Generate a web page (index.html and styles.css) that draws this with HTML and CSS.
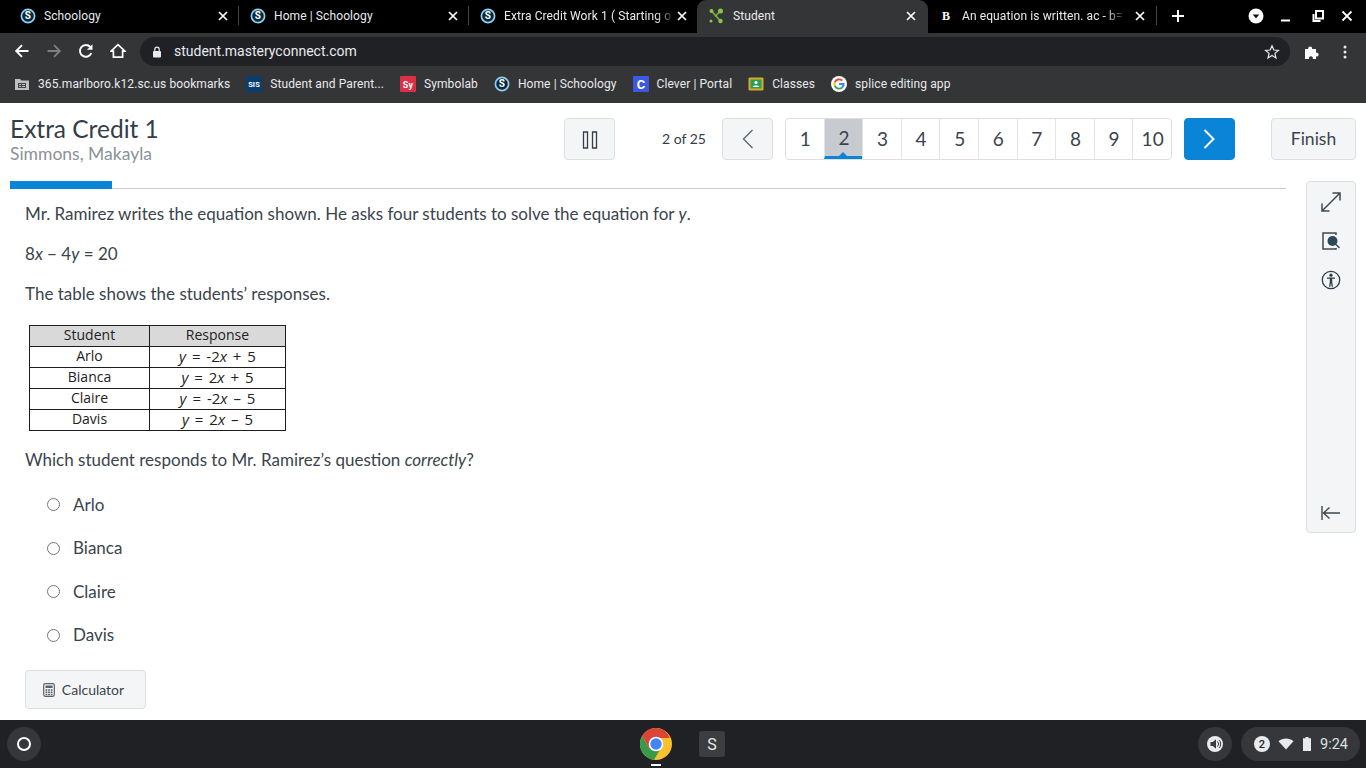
FILE: index.html
```html
<!DOCTYPE html>
<html lang="en">
<head>
<meta charset="utf-8">
<title>Student</title>
<link rel="stylesheet" href="styles.css">
</head>
<body>
<svg class="defs" width="0" height="0" aria-hidden="true">
  <symbol id="x" viewBox="0 0 12 12"><path d="M2 2l8 8M10 2l-8 8" stroke="#fff" stroke-width="1.7" fill="none"/></symbol>
</svg>
<header class="browser">
  <div class="tabstrip">
    <div class="tab"><svg class="fav" viewBox="0 0 16 16"><circle cx="8" cy="8" r="6.600" fill="#06263a" stroke="#8fd0ee" stroke-width="1.700"/><text x="8" y="11.400" text-anchor="middle" font-family="Roboto" font-weight="700" font-size="10" fill="#fff">S</text></svg><span class="tab-title">Schoology</span><svg class="close"><use href="#x"/></svg></div>
    <div class="tab sep"><svg class="fav" viewBox="0 0 16 16"><circle cx="8" cy="8" r="6.600" fill="#06263a" stroke="#8fd0ee" stroke-width="1.700"/><text x="8" y="11.400" text-anchor="middle" font-family="Roboto" font-weight="700" font-size="10" fill="#fff">S</text></svg><span class="tab-title">Home | Schoology</span><svg class="close"><use href="#x"/></svg></div>
    <div class="tab sep third"><svg class="fav" viewBox="0 0 16 16"><circle cx="8" cy="8" r="6.600" fill="#06263a" stroke="#8fd0ee" stroke-width="1.700"/><text x="8" y="11.400" text-anchor="middle" font-family="Roboto" font-weight="700" font-size="10" fill="#fff">S</text></svg><span class="tab-title fade">Extra Credit Work 1 ( Starting o</span><svg class="close"><use href="#x"/></svg></div>
    <div class="tab active"><svg class="fav" viewBox="0 0 16 16"><path d="M3.500 3l9 10M12.500 3L7 8.500" stroke="#7cb342" stroke-width="1.600"/><circle cx="3.500" cy="3" r="2" fill="#8bc34a"/><circle cx="12.500" cy="3" r="2.500" fill="#8bc34a"/><circle cx="12.500" cy="13" r="2.200" fill="#8bc34a"/><circle cx="3" cy="13" r="1.500" fill="#8bc34a"/></svg><span class="tab-title">Student</span><svg class="close"><use href="#x"/></svg></div>
    <div class="tab last"><svg class="fav" viewBox="0 0 16 16"><text x="8" y="12" text-anchor="middle" font-family="Liberation Serif" font-weight="700" font-size="12" fill="#fff">B</text></svg><span class="tab-title fade">An equation is written. ac - b=</span><svg class="close"><use href="#x"/></svg></div>
    <svg class="newtab" viewBox="0 0 14 14"><path d="M7 1v12M1 7h12" stroke="#fff" stroke-width="2"/></svg>
    <div class="win">
      <svg class="win-i" viewBox="0 0 16 16"><circle cx="8" cy="8" r="7.500" fill="#fff"/><path d="M4.800 6.500h6.400L8 10.600z" fill="#111"/></svg>
      <svg class="win-i win-min" viewBox="0 0 16 16"><path d="M3 12.500h9" stroke="#fff" stroke-width="2"/></svg>
      <svg class="win-i win-max" viewBox="0 0 16 16"><path d="M6 3h7v7.500H6zM3.500 6v7h7" stroke="#fff" stroke-width="2" fill="none"/></svg>
      <svg class="win-i" viewBox="0 0 16 16"><path d="M3.500 3.500l9 9M12.500 3.500l-9 9" stroke="#fff" stroke-width="1.800"/></svg>
    </div>
  </div>
  <div class="toolbar">
    <svg class="nav" viewBox="0 0 16 16"><path d="M14.500 8H2.500M8 2.200L2.200 8 8 13.800" stroke="#fff" stroke-width="1.900" fill="none"/></svg>
    <svg class="nav" viewBox="0 0 16 16"><path d="M1.500 8h12M8 2.200L13.800 8 8 13.800" stroke="#7d7e80" stroke-width="1.900" fill="none"/></svg>
    <svg class="nav" viewBox="0 0 16 16"><path d="M13.300 10.200A5.900 5.900 0 1 1 12.300 4" stroke="#fff" stroke-width="1.900" fill="none"/><path d="M14.500 1.200v5.600H8.900z" fill="#fff"/></svg>
    <svg class="nav" viewBox="0 0 16 16"><path d="M8 1.600L1 8.200h2.400v6h9.200v-6H15z" stroke="#fff" stroke-width="1.700" fill="none"/></svg>
    <div class="omnibox">
      <svg class="lock" viewBox="0 0 10 12"><path d="M2.800 5V3.400a2.200 2.200 0 0 1 4.400 0V5" stroke="#e8eaed" stroke-width="1.200" fill="none"/><rect x="1" y="5" width="8" height="6.500" rx="1" fill="#e8eaed"/></svg>
      <span class="url">student.masteryconnect.com</span>
      <svg class="star" viewBox="0 0 16 16"><path d="M8 1.800l1.800 4.200 4.600.4-3.500 3 1.100 4.500L8 11.500l-4 2.400 1.100-4.500-3.500-3 4.600-.4z" stroke="#e8eaed" stroke-width="1.200" fill="none"/></svg>
    </div>
    <svg class="puzzle" viewBox="0 0 16 16"><path d="M1 5h3.300a2 2 0 1 1 3.800 0H12v3.700a2 2 0 1 1 0 3.800V15H8.700a2 2 0 1 0-3.600 0H1z" fill="#fff"/></svg>
    <svg class="menu" viewBox="0 0 4 16"><circle cx="2" cy="3" r="1.500" fill="#e8eaed"/><circle cx="2" cy="8" r="1.500" fill="#e8eaed"/><circle cx="2" cy="13" r="1.500" fill="#e8eaed"/></svg>
  </div>
  <div class="bookmarks">
    <span class="bm"><svg class="bm-i" viewBox="0 0 16 16"><path d="M1 3h5l1.500 1.500H15V14H1z" fill="#bdbfc1"/><path d="M4 7h8v5H4z" fill="#444"/><path d="M5 8h2v1H5zM8 8h3v1H8zM5 10h2v1H5zM8 10h3v1H8z" fill="#bdbfc1"/></svg>365.marlboro.k12.sc.us bookmarks</span>
    <span class="bm"><svg class="bm-i" viewBox="0 0 16 16"><rect width="16" height="16" rx="1" fill="#0b3d6e"/><text x="8" y="11" text-anchor="middle" font-family="Roboto" font-weight="700" font-size="7.500" fill="#fff">SIS</text></svg>Student and Parent...</span>
    <span class="bm"><svg class="bm-i" viewBox="0 0 16 16"><rect width="16" height="16" rx="1" fill="#dc2f45"/><text x="8" y="11.500" text-anchor="middle" font-family="Roboto" font-weight="700" font-size="9" fill="#fff">Sy</text></svg>Symbolab</span>
    <span class="bm"><svg class="bm-i" viewBox="0 0 16 16"><circle cx="8" cy="8" r="6.600" fill="#06263a" stroke="#8fd0ee" stroke-width="1.700"/><text x="8" y="11.400" text-anchor="middle" font-family="Roboto" font-weight="700" font-size="10" fill="#fff">S</text></svg>Home | Schoology</span>
    <span class="bm"><svg class="bm-i" viewBox="0 0 16 16"><rect width="16" height="16" rx="1" fill="#3e58e0"/><text x="8" y="13" text-anchor="middle" font-family="Roboto" font-weight="700" font-size="13" fill="#fff">C</text></svg>Clever | Portal</span>
    <span class="bm"><svg class="bm-i" viewBox="0 0 16 16"><rect x="0.500" y="1.500" width="15" height="13" rx="1" fill="#d9a928"/><rect x="2.500" y="3.500" width="11" height="9" fill="#2e9d5c"/><circle cx="8" cy="6.500" r="1.600" fill="#fff"/><path d="M4.800 11c0-2 6.400-2 6.400 0z" fill="#fff"/></svg>Classes</span>
    <span class="bm"><svg class="bm-i" viewBox="0 0 16 16"><circle cx="8" cy="8" r="8" fill="#fff"/><path d="M8 4.200a3.800 3.800 0 0 1 2.600 1l1.300-1.300A5.700 5.700 0 0 0 3 5.500L4.600 6.700A3.700 3.700 0 0 1 8 4.200z" fill="#ea4335"/><path d="M4.600 6.700L3 5.500a5.700 5.700 0 0 0 0 5L4.600 9.300a3.700 3.700 0 0 1 0-2.600z" fill="#fbbc05"/><path d="M4.600 9.300L3 10.500a5.700 5.700 0 0 0 8.700 1.700l-1.500-1.200a3.700 3.700 0 0 1-5.600-1.700z" fill="#34a853"/><path d="M13.600 7H8v2.100h3.300a2.900 2.900 0 0 1-1.100 1.900l1.500 1.200A5.500 5.500 0 0 0 13.600 7z" fill="#4285f4"/></svg>splice editing app</span>
  </div>
</header>

<main class="page">
  <section class="head">
    <div class="titles">
      <h1 class="title">Extra Credit 1</h1>
      <div class="student">Simmons, Makayla</div>
    </div>
    <button class="btn btn-pause"><svg class="ic-pause" viewBox="0 0 16 18"><path d="M1.500 1h4v16h-4zM10.500 1h4v16h-4z" fill="none" stroke="#333e48" stroke-width="1.300"/></svg></button>
    <div class="count">2 of 25</div>
    <button class="btn btn-prev"><svg class="ic-chev" viewBox="0 0 12 20"><path d="M10.500 1L1.500 10l9 9" fill="none" stroke="#59636c" stroke-width="1.300"/></svg></button>
    <div class="pager">
      <span class="pg">1</span><span class="pg cur">2</span><span class="pg">3</span><span class="pg">4</span><span class="pg">5</span><span class="pg">6</span><span class="pg">7</span><span class="pg">8</span><span class="pg">9</span><span class="pg">10</span>
    </div>
    <button class="btn btn-next"><svg class="ic-chev" viewBox="0 0 12 20"><path d="M1.500 1l9 9-9 9" fill="none" stroke="#fff" stroke-width="2"/></svg></button>
    <button class="btn btn-finish">Finish</button>
  </section>

  <section class="work">
    <div class="col">
      <div class="progress"><div class="progress-fill"></div></div>
      <div class="question">
        <p>Mr. Ramirez writes the equation shown. He asks four students to solve the equation for <i>y</i>.</p>
        <p>8<i>x</i> − 4<i>y</i> = 20</p>
        <p>The table shows the students’ responses.</p>
        <table class="resp">
          <thead><tr><th class="c1">Student</th><th class="c2">Response</th></tr></thead>
          <tbody>
            <tr><td>Arlo</td><td class="eq"><i>y</i> = -2<i>x</i> + 5</td></tr>
            <tr><td>Bianca</td><td class="eq"><i>y</i> = 2<i>x</i> + 5</td></tr>
            <tr><td>Claire</td><td class="eq"><i>y</i> = -2<i>x</i> – 5</td></tr>
            <tr><td>Davis</td><td class="eq"><i>y</i> = 2<i>x</i> – 5</td></tr>
          </tbody>
        </table>
        <p class="ask">Which student responds to Mr. Ramirez’s question <i>correctly</i>?</p>
        <div class="choices">
          <label class="choice"><span class="radio"></span><span>Arlo</span></label>
          <label class="choice"><span class="radio"></span><span>Bianca</span></label>
          <label class="choice"><span class="radio"></span><span>Claire</span></label>
          <label class="choice"><span class="radio"></span><span>Davis</span></label>
        </div>
        <button class="btn btn-calc"><svg class="ic-calc" viewBox="0 0 12 14"><rect x="0.700" y="0.700" width="10.600" height="12.600" rx="1.500" fill="none" stroke="#59636c" stroke-width="1.200"/><path d="M2.500 2.500h7v2.500h-7z" fill="#59636c"/><path d="M2.500 6.300h1.800v1.500H2.500zM5.100 6.300h1.800v1.500H5.100zM7.700 6.300h1.800v1.500H7.700zM2.500 8.500h1.800V10H2.500zM5.100 8.500h1.800V10H5.100zM7.700 8.500h1.800V10H7.700zM2.500 10.700h1.800v1.500H2.500zM5.100 10.700h1.800v1.500H5.100zM7.700 10.700h1.800v1.500H7.700z" fill="#59636c"/></svg>Calculator</button>
      </div>
    </div>
    <aside class="side">
      <svg class="side-i" viewBox="0 0 20 20"><path d="M1 19L19 1M11.500 1H19v7.500M1 11.500V19h7.500" fill="none" stroke="#3f4952" stroke-width="1.500"/></svg>
      <svg class="side-i" viewBox="0 0 20 20"><path d="M15 4V2H2v16h13v-1" fill="none" stroke="#3f4952" stroke-width="1.500"/><circle cx="11.500" cy="10" r="5" fill="#2f4858"/><path d="M15 13.500l3.500 3.500" stroke="#3f4952" stroke-width="1.600"/></svg>
      <svg class="side-i" viewBox="0 0 20 20"><circle cx="10" cy="10" r="8.700" fill="none" stroke="#2f3b44" stroke-width="1.300"/><circle cx="10" cy="5.200" r="1.600" fill="#2f3b44"/><path d="M6 7.400h8v1.300h-2.800v3.200l.8 4.800h-1.300L10 12.800l-.7 3.900H8l.8-4.800V8.700H6z" fill="#2f3b44"/></svg>
      <svg class="side-i side-bottom" viewBox="0 0 20 14"><path d="M1 0v14M19 7H2.500M8.500 1.500L2.500 7l6 5.500" fill="none" stroke="#3f4952" stroke-width="1.400"/></svg>
    </aside>
  </section>
</main>

<footer class="shelf">
  <div class="shelf-l"><span class="launcher"><span class="launcher-dot"></span></span></div>
  <div class="shelf-c">
    <span class="app-chrome"><svg class="chrome" viewBox="0 0 32 32"><circle cx="16" cy="16" r="16" fill="#fbc02d"/><path d="M16 0A16 16 0 0 0 2.100 8L9.100 20 16 10h13.900A16 16 0 0 0 16 0z" fill="#db4437"/><path d="M2.100 8a16 16 0 0 0 11.800 23.900L20.900 20 9.100 20z" fill="#3a9a4b"/><circle cx="16" cy="16" r="7.300" fill="#fff"/><circle cx="16" cy="16" r="5.700" fill="#4285f4"/></svg><span class="running"></span></span>
    <span class="app-s">S</span>
  </div>
  <div class="shelf-r">
    <span class="vol"><svg class="vol-i" viewBox="0 0 16 16"><circle cx="8" cy="8" r="8" fill="#e8eaed"/><path d="M3.500 6v4h2.300L9 12.800V3.200L5.800 6z" fill="#3a3b3d"/><path d="M10.500 5.500a3.500 3.500 0 0 1 0 5M12 4a5.500 5.500 0 0 1 0 8" fill="none" stroke="#3a3b3d" stroke-width="1"/></svg></span>
    <span class="tray">
      <span class="badge">2</span>
      <svg class="wifi" viewBox="0 0 16 12"><path d="M8 11.500L.5 3.300C4.800-.4 11.200-.4 15.500 3.300z" fill="#e8eaed"/></svg>
      <svg class="batt" viewBox="0 0 8 14"><path d="M2.500 0h3v1.200H8V14H0V1.200h2.500z" fill="#e8eaed"/></svg>
      <span class="clock">9:24</span>
    </span>
  </div>
</footer>
</body>
</html>
```

FILE: styles.css
```css
* { box-sizing: border-box; }
html, body { margin: 0; padding: 0; height: 100%; }
body { width: 1366px; height: 768px; overflow: hidden; display: flex; flex-direction: column; background: #fff; font-family: "Lato", sans-serif; color: #3a444d; }
.defs { display: block; height: 0; }

/* browser frame */
.browser { flex: none; height: 103px; background: #343536; display: flex; flex-direction: column; font-family: "Roboto", sans-serif; }
.tabstrip { height: 33px; background: #000; display: flex; align-items: center; padding-left: 8px; }
.tab { width: 230px; height: 33px; display: flex; align-items: center; padding: 0 7px 2px 12px; gap: 8px; color: #e8eaed; font-size: 12px; letter-spacing: 0.1px; position: relative; }
.tab.third { padding-right: 8px; }
.tab.third .close { margin-left: -8px; }
.tab.sep::before { content: ""; position: absolute; left: 0; top: 6px; height: 19px; width: 1px; background: #44464a; }
.tab.active { background: #343536; border-radius: 9px 9px 0 0; padding: 0 9px 2px 11px; gap: 9px; width: 231px; margin-left: -1px; }
.tab.last { padding: 0 10px 2px 10px; }
.tab.last::after { content: ""; position: absolute; right: 1px; top: 6px; height: 19px; width: 1px; background: #44464a; }
.fav { width: 16px; height: 16px; flex: none; }
.close { width: 12px; height: 12px; flex: none; margin-right: 2px; }
.tab-title { flex: 1; white-space: nowrap; overflow: hidden; }
.tab-title.fade { -webkit-mask-image: linear-gradient(to right, #000 88%, transparent 100%); mask-image: linear-gradient(to right, #000 88%, transparent 100%); }
.newtab { width: 14px; height: 14px; margin: 0 0 2px 13px; flex: none; }
.win { margin-left: auto; display: flex; align-items: center; padding: 0 11px 2px 0; gap: 14px; }
.win-i { width: 16px; height: 16px; flex: none; }
.win-min { margin-right: 2px; }
.win-max { margin-right: -1px; }

.toolbar { height: 37px; display: flex; align-items: center; padding-left: 14px; gap: 16px; }
.nav { width: 16px; height: 16px; flex: none; margin-bottom: 1px; }
.omnibox { width: 1150px; height: 29px; margin-left: -2px; background: #202124; border-radius: 15px; display: flex; align-items: center; padding: 0 10px 0 12px; color: #e8eaed; font-size: 14px; }
.lock { width: 10px; height: 12px; flex: none; }
.url { margin: 0 0 1px 12px; flex: 1; }
.star { width: 16px; height: 16px; flex: none; }
.puzzle { width: 16px; height: 16px; flex: none; margin-left: -2px; }
.menu { width: 4px; height: 16px; flex: none; margin-left: 7px; }

.bookmarks { height: 33px; display: flex; align-items: center; padding: 0 0 5px 14px; gap: 16px; font-size: 12px; letter-spacing: 0.1px; color: #e8eaed; }
.bm { display: flex; align-items: center; gap: 8px; white-space: nowrap; }
.bm-i { width: 16px; height: 16px; flex: none; }

/* page */
.page { flex: 1; min-height: 0; padding: 0 10px; overflow: hidden; }
.head { height: 78px; display: flex; align-items: flex-start; padding-top: 12px; }
.titles { width: 554px; flex: none; }
.title { margin: 0; font-size: 24.5px; line-height: 28px; font-weight: 400; color: #333e48; }
.student { font-size: 17.5px; line-height: 21px; color: #8a9299; }
.btn { font-family: inherit; background: #f4f5f6; border: 1px solid #dcdfe1; border-radius: 4px; height: 42px; margin: 3px 0 0; padding: 0; display: flex; align-items: center; justify-content: center; color: #3a444d; }
.btn-pause { width: 51px; }
.ic-pause { width: 16px; height: 18px; margin-top: 2px; }
.count { width: 107px; flex: none; margin-top: 3px; height: 42px; line-height: 41px; font-size: 14px; padding-left: 47px; color: #333e48; white-space: nowrap; }
.btn-prev { width: 51px; }
.ic-chev { width: 12px; height: 20px; }
.btn-next .ic-chev { margin-left: -2px; }
.pager { width: 387px; height: 42px; margin: 3px 0 0 12px; border: 1px solid #dcdfe1; border-radius: 4px; display: flex; background: #fff; }
.pg { flex: 1; border-left: 1px solid #e3e5e7; display: flex; align-items: center; justify-content: center; font-size: 19px; padding: 0 0 1px 1px; color: #3a444d; position: relative; }
.pg:first-child { border-left: 0; }
.pg.cur { background: #c7cbcf; border-bottom: 3px solid #0a84d6; padding-bottom: 0; }
.pg.cur::after { content: ""; position: absolute; left: 50%; bottom: 0; margin-left: -4px; border: 4px solid transparent; border-top: 0; border-bottom-color: #0a84d6; }
.btn-next { width: 51px; margin-left: 12px; background: #0a84d6; border-color: #0a84d6; }
.btn-finish { width: 85px; margin-left: 36px; font-size: 17.5px; padding-bottom: 2px; }

.work { display: flex; gap: 20px; }
.col { width: 1276px; flex: none; }
.progress { height: 8px; border-bottom: 1px solid #c9cccf; }
.progress-fill { width: 102px; height: 8px; background: #0a84d6; }
.question { padding: 13px 0 0 15px; font-size: 17px; line-height: 24px; color: #3a444d; }
.question p { margin: 0 0 16px; }
.resp { border-collapse: collapse; margin: 19px 0 17px 4px; font-family: "Open Sans", sans-serif; font-size: 14px; color: #222; table-layout: fixed; width: 257px; }
.resp th, .resp td { border: 1px solid #1c1c1c; height: 21px; padding: 0 0 2px; line-height: 18px; text-align: center; font-weight: 400; }
.resp th { background: #d9d9d9; }
.resp .eq { font-size: 15px; word-spacing: 2px; }
.c1 { width: 120px; }
.question .ask { margin: 0; }
.choices { display: flex; flex-direction: column; padding-top: 11px; }
.choice { height: 43.5px; display: flex; align-items: center; font-size: 17px; padding-left: 22px; gap: 13px; }
.radio { width: 13px; height: 13px; border-radius: 50%; border: 1px solid #767676; background: #fff; flex: none; }
.btn-calc { width: 121px; height: 39px; margin-top: 13.2px; padding-right: 4px; font-size: 14px; gap: 7px; }
.ic-calc { width: 12px; height: 14px; margin-top: 1px; }
.side { width: 50px; height: 352px; background: #f4f5f6; border: 1px solid #dcdfe1; border-radius: 4px; display: flex; flex-direction: column; align-items: center; padding-top: 10px; gap: 19px; }
.side-i { width: 20px; height: 20px; flex: none; }
.side-bottom { margin-top: auto; margin-bottom: 12px; height: 14px; }

/* shelf */
.shelf { flex: none; height: 48px; background: #202124; display: grid; grid-template-columns: 1fr auto 1fr; align-items: center; color: #e8eaed; font-family: "Roboto", sans-serif; }
.shelf-l { padding-left: 7px; }
.launcher { width: 34px; height: 34px; border-radius: 50%; background: #36373a; display: flex; align-items: center; justify-content: center; }
.launcher-dot { width: 14px; height: 14px; border-radius: 50%; border: 2px solid #fff; }
.shelf-c { display: flex; align-items: center; gap: 27px; margin-left: -1px; }
.app-chrome { position: relative; display: block; width: 32px; height: 32px; }
.chrome { width: 32px; height: 32px; display: block; }
.running { position: absolute; left: 11px; top: 36px; width: 10px; height: 2px; background: #fff; }
.app-s { width: 26px; height: 26px; background: #3c3d40; border-radius: 2px; display: flex; align-items: center; justify-content: center; font-size: 16px; }
.shelf-r { display: flex; justify-content: flex-end; align-items: center; padding-right: 6px; gap: 8px; }
.vol { width: 34px; height: 34px; margin-right: 1px; border-radius: 50%; background: #36373a; display: flex; align-items: center; justify-content: center; }
.vol-i { width: 16px; height: 16px; }
.tray { width: 119px; height: 34px; border-radius: 17px; background: #36373a; display: flex; align-items: center; padding-left: 13px; gap: 8px; }
.badge { width: 16px; height: 16px; border-radius: 50%; background: #e8eaed; color: #222; font-size: 11px; font-weight: 500; display: flex; align-items: center; justify-content: center; }
.wifi { width: 16px; height: 12px; }
.batt { width: 8px; height: 14px; margin-left: 1px; }
.clock { font-size: 14.5px; margin-left: 1px; color: #dfe1e4; }
```
